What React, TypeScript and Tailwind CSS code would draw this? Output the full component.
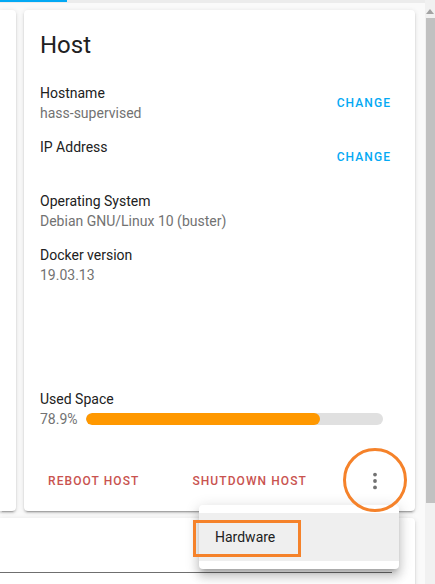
import React from 'react';

const cardShadow =
  'shadow-[0_2px_2px_0_rgba(0,0,0,0.14),0_1px_5px_0_rgba(0,0,0,0.12),0_3px_1px_-2px_rgba(0,0,0,0.2)]';

const InfoRow: React.FC<{ label: string; value: string; action?: string; hideValue?: boolean }> = ({
  label,
  value,
  action,
  hideValue,
}) => (
  <div className="flex items-center justify-between h-[40px]">
    <div className="flex flex-col text-[14px] leading-[20px]">
      <span className="text-[#212121]">{label}</span>
      <span className={hideValue ? 'text-white' : 'text-[#727272]'}>{value}</span>
    </div>
    {action && (
      <button className="px-2 h-9 text-[12px] font-medium tracking-[0.09em] uppercase text-[#03a9f4]">
        {action}
      </button>
    )}
  </div>
);

export default function App() {
  return (
    <div className="relative w-[435px] h-[584px] overflow-hidden bg-[#fafafa] flex font-['Roboto',sans-serif]">
      <div className="flex-1 flex flex-col">
        {/* tab strip remnant */}
        <div className="h-[3px] shrink-0 bg-[#ececec]">
          <div className="w-[67px] h-[2px] bg-[#03a9f4]" />
        </div>

        <div className="flex gap-2 mt-[7px] h-[501px] shrink-0">
          <div className={`w-[16px] bg-white rounded-r-[4px] ${cardShadow}`} />

          <div className={`w-[391px] bg-white rounded-[4px] flex flex-col ${cardShadow}`}>
            <h1 className="px-4 pt-[19px] text-[24px] leading-[32px] text-[#212121]">Host</h1>

            <div className="pl-4 pr-4 mt-[22px] flex flex-col gap-[14px]">
              <InfoRow label="Hostname" value="hass-supervised" action="Change" />
              <InfoRow label="IP Address" value="192.168.1.25/24" action="Change" hideValue />
              <InfoRow label="Operating System" value="Debian GNU/Linux 10 (buster)" />
              <InfoRow label="Docker version" value="19.03.13" />
            </div>

            <div className="mt-auto px-4 mb-[22px] text-[14px] leading-[20px]">
              <div className="text-[#212121]">Used Space</div>
              <div className="flex items-center gap-2 pr-4">
                <span className="text-[#727272]">78.9%</span>
                <div className="flex-1 h-[12px] rounded-full bg-[#e0e0e0] overflow-hidden">
                  <div className="h-full w-[78.9%] rounded-full bg-[#ff9800]" />
                </div>
              </div>
            </div>

            <div className="h-[60px] px-4 flex items-center">
              <button className="px-2 h-9 text-[12px] font-medium tracking-[0.09em] uppercase text-[#c9534f]">
                Reboot Host
              </button>
              <button className="ml-[37px] px-2 h-9 text-[12px] font-medium tracking-[0.09em] uppercase text-[#c9534f]">
                Shutdown Host
              </button>
              <button className="ml-auto w-12 h-12 flex items-center justify-center">
                <svg width="20" height="20" viewBox="0 0 20 20" fill="#727272">
                  <circle cx="10" cy="3.6" r="1.9" />
                  <circle cx="10" cy="10" r="1.9" />
                  <circle cx="10" cy="16.4" r="1.9" />
                </svg>
              </button>
            </div>
          </div>
        </div>

        <div className={`mt-[7px] w-[415px] h-[80px] shrink-0 bg-white rounded-tr-[4px] ${cardShadow}`}>
          <div className="mt-[54px] mr-[23px] h-px bg-[#6f6f6f]" />
        </div>
      </div>

      {/* scrollbar */}
      <div className="w-[10px] bg-[#f1f1f1] flex flex-col items-center">
        <div className="mt-[9px] w-0 h-0 border-l-[4px] border-r-[4px] border-b-[5px] border-l-transparent border-r-transparent border-b-[#a3a3a3]" />
        <div className="mt-[4px] w-[9px] h-[485px] bg-[#c1c1c1]" />
      </div>

      {/* overflow menu */}
      <div className="absolute left-[199px] top-[505px] w-[200px] py-2 bg-white rounded-[4px] shadow-[0_5px_5px_-3px_rgba(0,0,0,0.2),0_8px_10px_1px_rgba(0,0,0,0.14),0_3px_14px_2px_rgba(0,0,0,0.12)]">
        <div className="h-12 px-4 flex items-center bg-[#efefef] text-[14px] text-[#212121]">Hardware</div>
      </div>

      {/* annotations */}
      <div className="absolute left-[343px] top-[448px] w-[64px] h-[64px] rounded-full border-[3px] border-[#f5822a]" />
      <div className="absolute left-[193px] top-[520px] w-[108px] h-[37px] border-[3px] border-[#f5822a]" />
    </div>
  );
}
